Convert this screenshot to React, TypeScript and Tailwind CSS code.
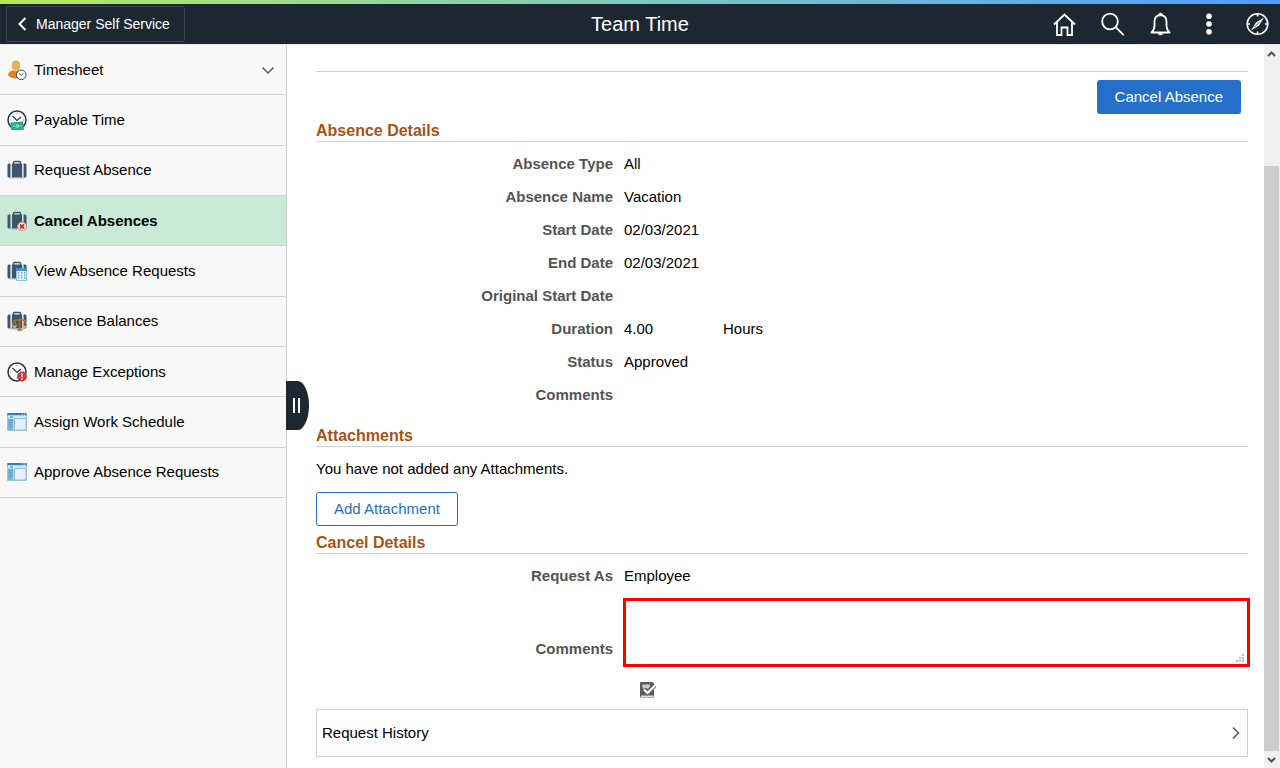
import type { ReactNode } from 'react'
import clsx from 'clsx'

function Suitcase() {
    return (
        <g>
            <path d="M6.500 4V2.500q0-1 1-1h5q1 0 1 1V4" fill="none" stroke="#3d556b" strokeWidth="1.500" />
            <path d="M5 3.500h10v14H5z" fill="#3d556b" />
            <path d="M2 3.500H3.500v14H2Q.5 17.500.5 16V5Q.5 3.500 2 3.500zM18 3.500h-1.500v14H18q1.500 0 1.500-1.500V5Q19.500 3.500 18 3.500z" fill="#3d556b" />
            <path d="M4.300 3.500v14M15.700 3.500v14" stroke="#d3d8dc" />
            <path d="M3 18h14" stroke="#9aa5af" strokeWidth=".8" />
        </g>
    )
}

function Clock() {
    return (
        <g>
            <circle cx="10" cy="10" r="9" fill="#fff" stroke="#26354a" strokeWidth="1.500" />
            <path d="M5.500 6l4.500 4.500 4-3.500" fill="none" stroke="#26354a" strokeWidth="1.200" />
            <path d="M10 2.800v1.500M10 15.700v1.500M2.800 10h1.500M15.700 10h1.500" stroke="#8994a0" />
        </g>
    )
}

function WindowShape() {
    return (
        <g>
            <path d="M.5 1.500h19v17H.5z" fill="#e9f2f8" stroke="#9cc5df" />
            <path d="M.5 1h19v2.500H.5z" fill="#2a80b9" />
            <path d="M15 2h1M17 2h1" stroke="#e9f2f8" />
            <path d="M1 3.500h18V6H1z" fill="#d5e7f2" />
            <path d="M3 5h3" stroke="#2a80b9" />
            <path d="M1 6.500h5.500V18H1z" fill="#7fb3d5" />
            <path d="M2 8.500h4M2 10.500h3M2 12.500h3M2 14.500h3" stroke="#4f9ac8" strokeWidth=".8" />
            <path d="M7.500 6.500h11.500V18H7.500z" fill="#e6f1f9" stroke="#8fbddb" />
        </g>
    )
}

const items: { title: string; icon: ReactNode }[] = [
    {
        title: 'Timesheet',
        icon: (
            <>
                <ellipse cx="9" cy="5.500" rx="4.300" ry="5.300" fill="#e6b450" />
                <path d="M1 15.500q0-4 5-5.300 3 2 6 0 5 1.300 5 5.300-3 3-8 3t-8-3z" fill="#e67e22" />
                <circle cx="14.200" cy="14.800" r="4.800" fill="#fff" stroke="#3b4858" />
                <path d="M11.800 13l2.400 2.300 2.300-2" fill="none" stroke="#3b4858" />
            </>
        ),
    },
    {
        title: 'Payable Time',
        icon: (
            <>
                <Clock />
                <path d="M3.500 12.500l12.500-1 1 8.500H4z" fill="#1fae8c" />
                <circle cx="10.300" cy="16" r="1.300" fill="none" stroke="#bdf0e2" />
                <path d="M6 16h2M12.800 16h2" stroke="#bdf0e2" />
            </>
        ),
    },
    { title: 'Request Absence', icon: <Suitcase /> },
    {
        title: 'Cancel Absences',
        icon: (
            <>
                <Suitcase />
                <circle cx="15" cy="15.500" r="4.400" fill="#f8eeee" stroke="#d28781" />
                <path d="M13 13.500l4 4M17 13.500l-4 4" stroke="#c52f25" strokeWidth="1.900" />
            </>
        ),
    },
    {
        title: 'View Absence Requests',
        icon: (
            <>
                <Suitcase />
                <path d="M9.500 8h10v11.500h-10z" fill="#fff" stroke="#8cc3e6" />
                <path d="M9 7.500h11v2.500H9z" fill="#3498db" />
                <path d="M11.500 6.500v2M17.500 6.500v2" stroke="#2a80b9" />
                <path d="M11 12h7.500M11 14.500h7.500M11 17h7.500" stroke="#4a9fd6" strokeWidth="1.400" strokeDasharray="1.500 1.500" />
            </>
        ),
    },
    {
        title: 'Absence Balances',
        icon: (
            <>
                <Suitcase />
                <path d="M12.500 7.500v11M10 19h5M7 9.500l5.500-1 5.500 1" fill="none" stroke="#d3641d" strokeWidth="1.500" />
                <path d="M7.500 9.500l-2 5M7.500 9.500l2 5M17.500 9.500l-2 5M17.500 9.500l2 5" stroke="#c69a40" strokeWidth=".7" />
                <path d="M5 14.500h5q-.5 2.500-2.500 2.500T5 14.500zM15 14.500h5q-.5 2.500-2.500 2.500T15 14.500z" fill="#e6b450" />
            </>
        ),
    },
    {
        title: 'Manage Exceptions',
        icon: (
            <>
                <Clock />
                <circle cx="15" cy="14.500" r="4.900" fill="#d13d30" />
                <path d="M15 11.300v4M15 16.300v1.500" stroke="#fff" strokeWidth="1.500" />
            </>
        ),
    },
    { title: 'Assign Work Schedule', icon: <WindowShape /> },
    { title: 'Approve Absence Requests', icon: <WindowShape /> },
]

const details = [
    { label: 'Absence Type', value: 'All' },
    { label: 'Absence Name', value: 'Vacation' },
    { label: 'Start Date', value: '02/03/2021' },
    { label: 'End Date', value: '02/03/2021' },
    { label: 'Original Start Date', value: '' },
    { label: 'Duration', value: '4.00', unit: 'Hours' },
    { label: 'Status', value: 'Approved' },
    { label: 'Comments', value: '' },
]

const actions: { label: string; icon: ReactNode }[] = [
    {
        label: 'Home',
        icon: <path d="M1 12.500L11.500 2.500 22 12.500M4 10.500v12.500h4.500v-7.500h6V23H19V10.500" />,
    },
    {
        label: 'Search',
        icon: <><circle cx="9" cy="9.500" r="7.800" /><path d="M14.700 15.200l8 8" /></>,
    },
    {
        label: 'Notifications',
        icon: (
            <>
                <path d="M2.500 20.500q3-3 3-7V9.500q0-6 6-6.500 6 .5 6 6.500v4q0 4 3 7z" strokeLinejoin="round" />
                <path d="M9.500 3q0-2 2-2t2 2zM9 21.500q.5 1.500 2.500 1.500t2.500-1.500z" fill="currentColor" strokeWidth=".5" />
            </>
        ),
    },
    {
        label: 'Actions',
        icon: (
            <g fill="currentColor" stroke="none">
                <circle cx="12" cy="4.200" r="2.800" />
                <circle cx="12" cy="12" r="2.800" />
                <circle cx="12" cy="19.800" r="2.800" />
            </g>
        ),
    },
    {
        label: 'NavBar',
        icon: (
            <>
                <circle cx="12.500" cy="12" r="10.300" strokeWidth="1.600" />
                <path d="M19 5.500l-5 8-8 5 5-8z" fill="currentColor" stroke="none" />
                <path d="M9.500 15l5-5" stroke="#1d2732" strokeWidth=".8" />
                <path d="M12.500 2v2.500M12.500 19.500V22M2.500 12H5M20 12h2.500" strokeWidth="1.500" />
            </>
        ),
    },
]

function SectionTitle({ children }: { children: ReactNode }) {
    return (
        <h2 className="border-b border-[#cdd1d8] text-base leading-5 font-bold text-[#a75315]">
            {children}
        </h2>
    )
}

export default function App() {
    return (
        <div className="flex h-screen flex-col bg-white font-['Liberation_Sans',Arial,sans-serif] text-[15px] leading-5 text-black">
            <div className="h-1 shrink-0 bg-linear-to-r from-[#b5ea4f] to-[#4f9bff]" />
            <header className="grid h-[41px] shrink-0 grid-cols-[1fr_auto_1fr] items-center border-b border-[#e8eaec] bg-[#1d2732] text-white">
                <button className="ml-[6px] flex h-9 items-center gap-2 justify-self-start rounded-[3px] border border-[#3d4753] pr-[14px] pl-[10px] text-sm">
                    <svg className="h-4 w-[11px]" viewBox="0 0 11 16" fill="none" stroke="currentColor" strokeWidth="2">
                        <path d="M8.500 2L2.500 8l6 6" />
                    </svg>
                    Manager Self Service
                </button>
                <h1 className="text-xl">Team Time</h1>
                <div className="flex gap-6 justify-self-end pr-[11px]">
                    {actions.map((action) => (
                        <button key={action.label} aria-label={action.label} className="h-6 w-6">
                            <svg className="h-6 w-6" viewBox="0 0 24 24" fill="none" stroke="currentColor" strokeWidth="1.800">
                                {action.icon}
                            </svg>
                        </button>
                    ))}
                </div>
            </header>

            <div className="relative flex min-h-0 flex-1">
                <aside className="w-[287px] shrink-0 border-r border-[#cdd3da] bg-[#f8f8f8]">
                    <nav className="grid min-h-[453px] auto-rows-fr">
                        {items.map((item) => (
                            <a
                                key={item.title}
                                href="#"
                                className={clsx(
                                    'flex items-center gap-[7px] border-b border-[#cdd3da] pr-3 pl-[7px]',
                                    item.title === 'Cancel Absences' && 'bg-[#c8ead6] font-bold'
                                )}
                            >
                                <svg className="h-5 w-5 shrink-0" viewBox="0 0 20 20">{item.icon}</svg>
                                <span className="flex-1">{item.title}</span>
                                {item.title === 'Timesheet' && (
                                    <svg className="h-3 w-3" viewBox="0 0 12 12" fill="none" stroke="#5a5f66" strokeWidth="1.500">
                                        <path d="M.5 3.500L6 9l5.500-5.500" />
                                    </svg>
                                )}
                            </a>
                        ))}
                    </nav>
                </aside>

                <div className="pointer-events-none absolute inset-y-0 left-[286px] flex items-center pb-[2px]">
                    <button
                        aria-label="Collapse navigation"
                        className="pointer-events-auto flex h-[49px] w-[23px] items-center gap-[3px] rounded-r-[50%] bg-[#1d2732] pl-[7px]"
                    >
                        <span className="h-[15px] w-[2px] bg-white" />
                        <span className="h-[15px] w-[2px] bg-white" />
                    </button>
                </div>

                <main className="min-w-0 flex-1 overflow-hidden pt-[26px] pr-4 pl-[29px]">
                    <div className="flex justify-end border-t border-[#cdd1d1] pt-2 pr-[7px] pb-[7px]">
                        <button className="h-[34px] rounded-[3px] bg-[#2470c9] px-[18px] text-white">Cancel Absence</button>
                    </div>

                    <SectionTitle>Absence Details</SectionTitle>
                    <dl className="pt-[5px] pb-[15px]">
                        {details.map((row) => (
                            <div key={row.label} className="grid h-[33px] grid-cols-[297px_1fr] items-center gap-[11px]">
                                <dt className="text-right font-bold text-[#545454]">{row.label}</dt>
                                <dd className="flex">
                                    <span className="w-[99px]">{row.value}</span>
                                    {row.unit && <span>{row.unit}</span>}
                                </dd>
                            </div>
                        ))}
                    </dl>

                    <SectionTitle>Attachments</SectionTitle>
                    <p className="pt-3 pb-[13px]">You have not added any Attachments.</p>
                    <button className="mb-[7px] block h-[34px] rounded-[3px] border border-[#2470c9] px-[17px] text-[#2470c9]">
                        Add Attachment
                    </button>

                    <SectionTitle>Cancel Details</SectionTitle>
                    <dl className="grid grid-cols-[297px_1fr] items-center gap-[11px] pt-3">
                        <dt className="text-right font-bold text-[#545454]">Request As</dt>
                        <dd>Employee</dd>
                    </dl>
                    <div className="grid grid-cols-[297px_1fr] gap-[10px] pt-3">
                        <label htmlFor="comments" className="self-end pb-2 text-right font-bold text-[#545454]">Comments</label>
                        <div className="relative -mr-[2px]">
                            <textarea id="comments" className="block h-[69px] w-full resize-none border-3 border-[#ff0000] px-2 outline-none" />
                            <svg className="pointer-events-none absolute right-[6px] bottom-[5px] h-2 w-2" viewBox="0 0 8 8" fill="#bbb" shapeRendering="crispEdges">
                                <path d="M6 0h2v2H6zM3 3h2v2H3zM6 3h2v2H6zM0 6h2v2H0zM3 6h2v2H3zM6 6h2v2H6z" />
                            </svg>
                        </div>
                    </div>
                    <button aria-label="Spell check" className="mt-[15px] mb-[11px] ml-[324px] block h-4 w-4">
                        <svg className="h-4 w-4" viewBox="0 0 16 16">
                            <path d="M1 0h11q2 0 2 2v13.500H1q-1 0-1-1V1q0-1 1-1z" fill="#5c5c5c" />
                            <path d="M1 13.500h12.500v1.500H1z" fill="#e2e2e2" />
                            <path d="M2 2.500h8v2l-2 2.500-2-1-3 1z" fill="#c9c9c9" />
                            <path d="M4 7.500l3.500 3.500L15 3.500" fill="none" stroke="#5c5c5c" strokeWidth="4" />
                            <path d="M4 7.500l3.500 3.500L15 3.500" fill="none" stroke="#fff" strokeWidth="2.200" />
                        </svg>
                    </button>
                    <button className="flex h-12 w-full items-center justify-between border border-[#cdd1d8] pr-[7px] pl-[5px]">
                        Request History
                        <svg className="h-3 w-2" viewBox="0 0 8 12" fill="none" stroke="#555" strokeWidth="1.500">
                            <path d="M1 .5L6.500 6 1 11.500" />
                        </svg>
                    </button>
                </main>

                <div className="flex w-4 shrink-0 flex-col bg-[#f0f0f0]">
                    <svg className="h-[17px] w-4" viewBox="0 0 16 17" fill="none" stroke="#505050" strokeWidth="2">
                        <path d="M4 11l3.500-3.500L11 11" />
                    </svg>
                    <div className="mt-[104px] w-[15px] flex-1 bg-[#cdcdcd]" />
                    <svg className="h-[17px] w-4" viewBox="0 0 16 17" fill="none" stroke="#505050" strokeWidth="2">
                        <path d="M4 7l3.500 3.500L11 7" />
                    </svg>
                </div>
            </div>
        </div>
    )
}
